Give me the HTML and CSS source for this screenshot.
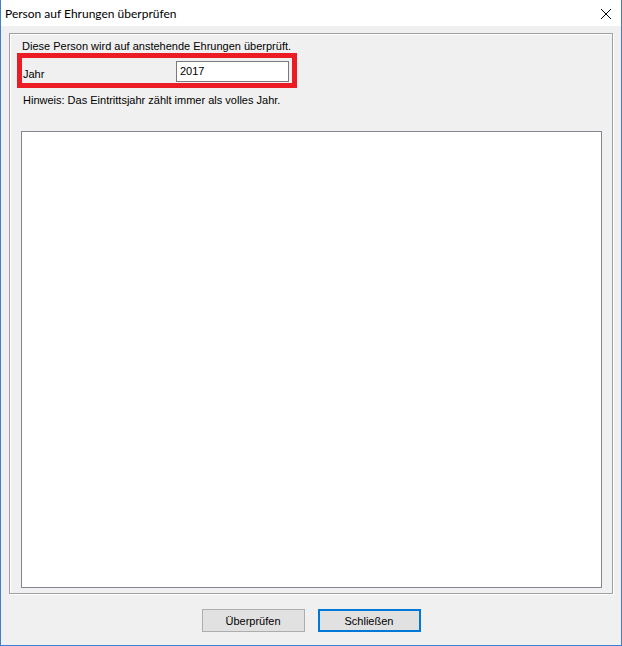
FILE: index.html
```html
<!DOCTYPE html>
<html lang="de">
<head>
<meta charset="utf-8">
<title>Person auf Ehrungen überprüfen</title>
<link rel="stylesheet" href="styles.css">
</head>
<body>
<div class="window">
  <div class="titlebar">
    <span class="title">Person auf Ehrungen überprüfen</span>
    <svg class="close" width="12" height="12" viewBox="0 0 12 12"><path d="M1 1 L11 11 M11 1 L1 11" stroke="#000" stroke-width="1" fill="none"/></svg>
  </div>
  <div class="client">
    <div class="frame">
      <div class="intro">Diese Person wird auf anstehende Ehrungen überprüft.</div>
      <div class="highlight">
        <span class="label">Jahr</span>
        <div class="textbox">2017</div>
      </div>
      <div class="hint">Hinweis: Das Eintrittsjahr zählt immer als volles Jahr.</div>
      <div class="listbox"></div>
    </div>
    <div class="buttons">
      <div class="btn">Überprüfen</div>
      <div class="btn default">Schließen</div>
    </div>
  </div>
</div>
</body>
</html>
```
FILE: styles.css
```css
html, body {
  margin: 0;
  padding: 0;
  background: #f0f0f0;
}
body {
  font-family: "Liberation Sans", Arial, sans-serif;
  font-size: 11px;
  color: #000;
}
.window {
  width: 622px;
  height: 646px;
  box-sizing: border-box;
  border: 1px solid #3f7fcf;
  border-top: none;
  display: flex;
  flex-direction: column;
  background: #f0f0f0;
}
.titlebar {
  height: 26px;
  flex: none;
  background: #fff;
  display: flex;
  align-items: center;
  padding-left: 4px;
  padding-right: 9px;
}
.title {
  flex: 1;
  font-family: Lato, "Liberation Sans", sans-serif;
  font-size: 12px;
  line-height: 16px;
  padding-top: 1px;
}
.close {
  display: block;
  margin-top: 1px;
}
.client {
  flex: 1;
  display: flex;
  flex-direction: column;
}
.frame {
  margin: 7px 0 0 8px;
  width: 604px;
  height: 561px;
  box-sizing: border-box;
  border: 1px solid #a0a0a0;
  box-shadow: inset 1px 1px 0 #fff, 1px 1px 0 #fff;
  display: flex;
  flex-direction: column;
  align-items: flex-start;
}
.intro {
  margin: 6px 0 0 12px;
  line-height: 13px;
}
.highlight {
  margin-left: 7px;
  width: 280px;
  height: 35px;
  box-sizing: border-box;
  border: 5px solid #ec1c24;
  display: flex;
  align-items: flex-start;
  padding-left: 1px;
}
.label {
  width: 153px;
  margin-top: 9px;
  line-height: 14px;
}
.textbox {
  margin-top: 3px;
  width: 113px;
  height: 21px;
  box-sizing: border-box;
  border: 1px solid #7a7a7a;
  background: #fff;
  padding: 2px 0 0 3px;
  line-height: 14px;
}
.hint {
  margin: 5px 0 0 13px;
  line-height: 14px;
}
.listbox {
  margin: 24px 0 0 11px;
  width: 581px;
  height: 457px;
  box-sizing: border-box;
  border: 1px solid #828790;
  background: #fff;
}
.buttons {
  margin-top: 15px;
  display: flex;
  justify-content: center;
  gap: 13px;
}
.btn {
  width: 103px;
  height: 23px;
  box-sizing: border-box;
  border: 1px solid #adadad;
  background: #e1e1e1;
  display: flex;
  align-items: center;
  justify-content: center;
  line-height: 14px;
}
.btn.default {
  border: 2px solid #0078d7;
}
```
